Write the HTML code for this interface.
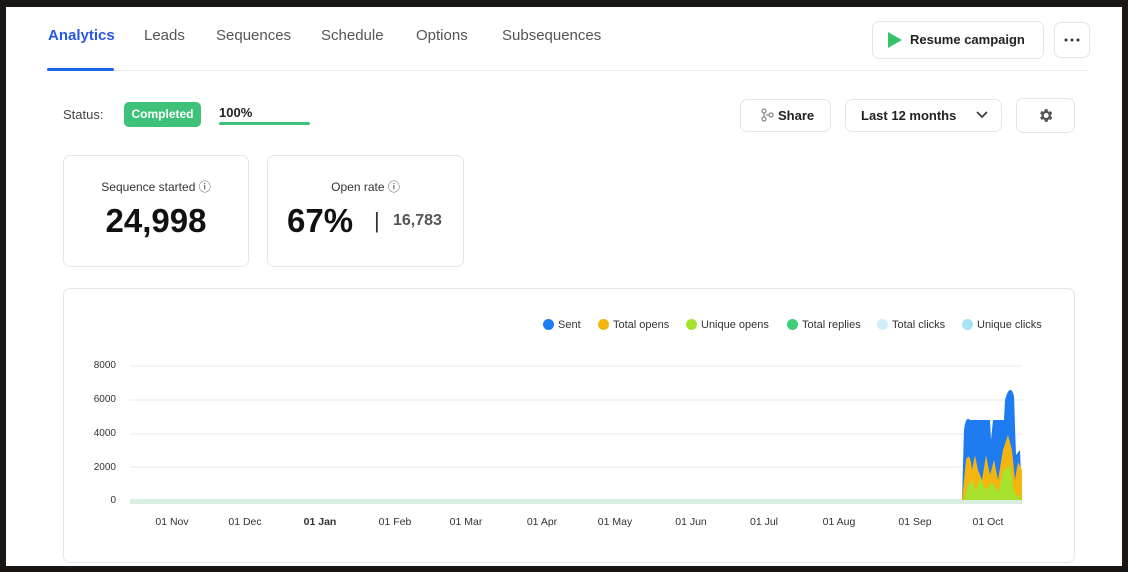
<!DOCTYPE html><html><head><style>
body{margin:0;width:1128px;height:572px;background:#1a1614;font-family:"Liberation Sans",sans-serif;overflow:hidden;position:relative}
.w{position:absolute;left:6px;top:7px;width:1116px;height:559px;background:#fff}
.a{position:absolute}
.tab{position:absolute;top:27px;font-size:15px;color:#555}
.btn{position:absolute;border:1px solid #e6e6ea;border-radius:7px;background:#fff;font-size:13px;font-weight:bold;color:#222}
.card{position:absolute;border:1px solid #e6e6ea;border-radius:7px;background:#fff}
.lab{font-size:12px;color:#333}
.leg{position:absolute;top:319px;font-size:11px;color:#333}
.leg i{display:inline-block;width:11px;height:11px;border-radius:50%;margin-right:4px;vertical-align:-2px}
.yl{position:absolute;left:80px;width:36px;text-align:right;font-size:10px;color:#333}
.xl{position:absolute;top:516px;font-size:10.5px;color:#333;width:60px;text-align:center}
</style></head><body>
<div class="w"></div>
<div class="tab" style="left:48px;color:#2856e0;font-weight:bold">Analytics</div>
<div class="tab" style="left:144px">Leads</div>
<div class="tab" style="left:216px">Sequences</div>
<div class="tab" style="left:321px">Schedule</div>
<div class="tab" style="left:416px">Options</div>
<div class="tab" style="left:502px">Subsequences</div>
<div class="a" style="left:47px;top:70px;width:1042px;height:1px;background:#eceef2"></div>
<div class="a" style="left:47px;top:68px;width:67px;height:3px;background:#1f63e6;border-radius:2px"></div>
<div class="btn" style="left:872px;top:21px;width:170px;height:36px"><svg class="a" style="left:15px;top:10px" width="14" height="16"><path d="M0 0L14 8L0 16Z" fill="#35c26b"/></svg><span class="a" style="left:37px;top:10px">Resume campaign</span></div>
<div class="btn" style="left:1054px;top:22px;width:34px;height:34px"><svg class="a" style="left:9px;top:15px" width="16" height="4"><circle cx="2" cy="2" r="1.5" fill="#333"/><circle cx="8" cy="2" r="1.5" fill="#333"/><circle cx="14" cy="2" r="1.5" fill="#333"/></svg></div>
<div class="a" style="left:63px;top:107px;font-size:13px;color:#444">Status:</div>
<div class="a" style="left:124px;top:102px;width:77px;height:25px;background:#3ec27a;border-radius:5px;color:#fff;font-size:12px;font-weight:bold;text-align:center;line-height:24px">Completed</div>
<div class="a" style="left:219px;top:105px;font-size:13px;font-weight:bold;color:#222">100%</div>
<div class="a" style="left:219px;top:122px;width:91px;height:3px;background:#3ec27a;border-radius:2px"></div>
<div class="btn" style="left:740px;top:99px;width:89px;height:31px"><svg class="a" style="left:19px;top:8px" width="14" height="14" fill="none" stroke="#888" stroke-width="1.2"><circle cx="4" cy="3" r="2"/><circle cx="4" cy="11" r="2"/><circle cx="11" cy="7" r="2"/><path d="M4 5v4M6 7h3"/></svg><span class="a" style="left:37px;top:8px">Share</span></div>
<div class="btn" style="left:845px;top:99px;width:155px;height:31px"><span class="a" style="left:15px;top:8px">Last 12 months</span><svg class="a" style="left:130px;top:11px" width="12" height="8"><path d="M1 1L6 6L11 1" stroke="#333" stroke-width="1.6" fill="none"/></svg></div>
<div class="btn" style="left:1016px;top:98px;width:57px;height:33px"><svg class="a" style="left:20px;top:8px" width="17" height="17" viewBox="0 0 24 24"><path fill="#555" d="M19.4 13a7.5 7.5 0 000-2l2.1-1.6-2-3.5-2.5 1a7.600 7.6 0 00-1.7-1L15 3h-4l-.4 2.7a7.6 7.6 0 00-1.7 1l-2.5-1-2 3.5L6.5 11a7.5 7.5 0 000 2l-2.1 1.6 2 3.5 2.5-1a7.6 7.6 0 001.7 1L11 21h4l.4-2.7a7.6 7.6 0 001.7-1l2.5 1 2-3.5zM13 15.5a3.5 3.5 0 110-7 3.5 3.5 0 010 7z"/></svg></div>
<div class="card" style="left:63px;top:155px;width:184px;height:110px"><div class="a lab" style="left:0;width:184px;text-align:center;top:22px">Sequence started ⓘ</div><div class="a" style="left:0;width:184px;text-align:center;top:46px;font-size:33px;font-weight:bold;color:#111">24,998</div></div>
<div class="card" style="left:267px;top:155px;width:195px;height:110px"><div class="a lab" style="left:0;width:195px;text-align:center;top:22px">Open rate ⓘ</div><div class="a" style="left:19px;top:46px;font-size:33px;font-weight:bold;color:#111">67%</div><div class="a" style="left:106px;top:52px;font-size:22px;color:#333">|</div><div class="a" style="left:125px;top:56px;font-size:16px;font-weight:bold;color:#555">16,783</div></div>
<div class="card" style="left:63px;top:288px;width:1010px;height:273px"></div>
<div class="leg" style="left:543px"><i style="background:#1e7bf0"></i>Sent</div>
<div class="leg" style="left:598px"><i style="background:#f5b50f"></i>Total opens</div>
<div class="leg" style="left:686px"><i style="background:#a6e22e"></i>Unique opens</div>
<div class="leg" style="left:787px"><i style="background:#3ecf78"></i>Total replies</div>
<div class="leg" style="left:877px"><i style="background:#cfeff8"></i>Total clicks</div>
<div class="leg" style="left:962px"><i style="background:#a8e4f0"></i>Unique clicks</div>
<div class="yl" style="top:360px">8000</div><div class="yl" style="top:394px">6000</div><div class="yl" style="top:428px">4000</div><div class="yl" style="top:462px">2000</div><div class="yl" style="top:495px">0</div>
<svg class="a" style="left:0;top:0" width="1128" height="572">
<g stroke="#e8e8e8"><path d="M130 366H1022M130 400H1022M130 434H1022M130 467H1022"/></g>
<rect x="130" y="499" width="892" height="5" fill="#d8efe0"/>
<path d="M962 500L964 430Q966 415 970 420L990 420L991 440L993 420L1004 420L1005 400Q1010 382 1014 396L1016 455L1020 450L1022 500Z" fill="#1e7bf0"/>
<path d="M962 500L966 460Q970 450 972 470L975 455L978 470L982 480L986 455L990 475L994 460L998 480L1003 450L1008 435L1012 450L1015 480L1018 462L1022 470L1022 500Z" fill="#f5b50f"/>
<path d="M964 500L968 485L972 480L976 492L980 478L986 490L992 482L998 492L1004 470L1010 465L1014 492L1022 500Z" fill="#a6e22e"/>
</svg>
<div class="xl" style="left:142px">01 Nov</div><div class="xl" style="left:215px">01 Dec</div><div class="xl" style="left:290px;font-weight:bold">01 Jan</div><div class="xl" style="left:365px">01 Feb</div><div class="xl" style="left:436px">01 Mar</div><div class="xl" style="left:512px">01 Apr</div><div class="xl" style="left:585px">01 May</div><div class="xl" style="left:661px">01 Jun</div><div class="xl" style="left:734px">01 Jul</div><div class="xl" style="left:809px">01 Aug</div><div class="xl" style="left:885px">01 Sep</div><div class="xl" style="left:958px">01 Oct</div>
</body></html>
